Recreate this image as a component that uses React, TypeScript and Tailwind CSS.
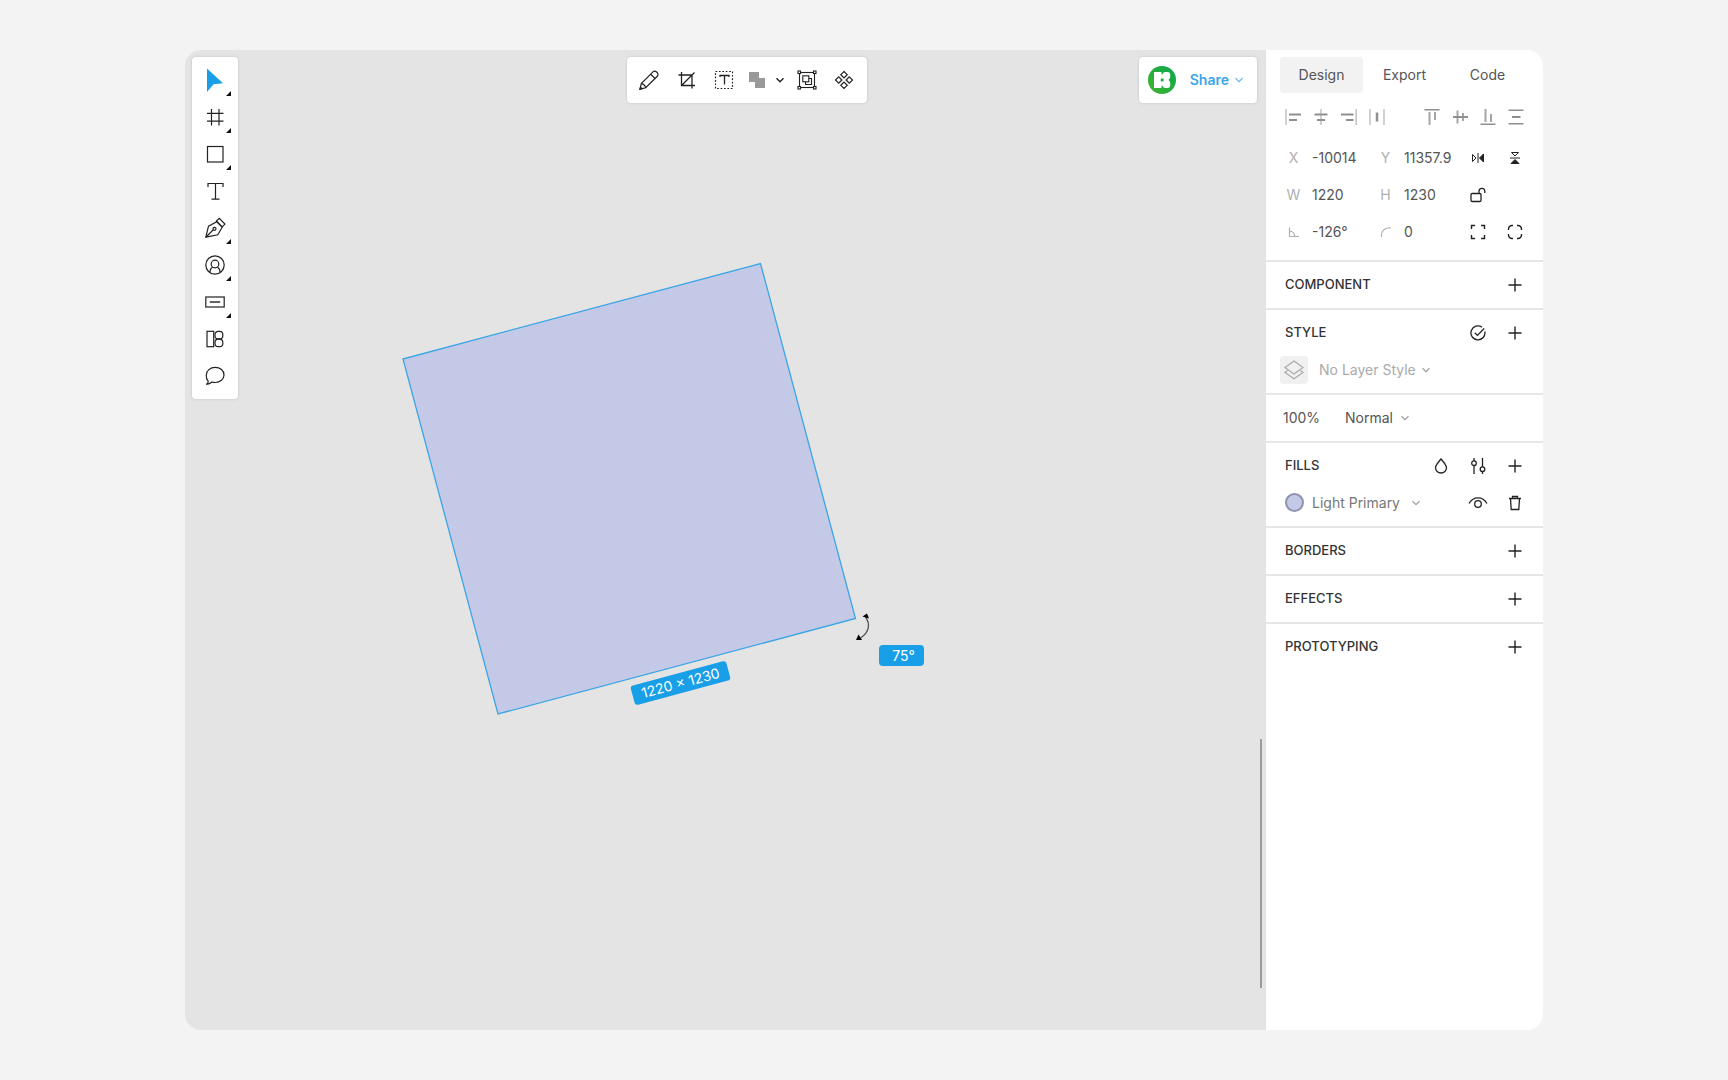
import type { ReactNode } from 'react';

type IconProps = { size?: number; children: ReactNode; className?: string; width?: number };

function Icon({ size = 24, children, className = '', width = 1 }: IconProps) {
  return (
    <svg
      width={size}
      height={size}
      viewBox={`0 0 ${size} ${size}`}
      fill="none"
      stroke="currentColor"
      strokeWidth={width}
      className={`shrink-0 ${className}`}
      aria-hidden="true"
    >
      {children}
    </svg>
  );
}

function Chevron({ className = '' }: { className?: string }) {
  return (
    <Icon size={10} width={1.2} className={className}>
      <path d="M1.5 3.2 5 6.7l3.5-3.5" />
    </Icon>
  );
}

const tools: { name: string; menu: boolean; icon: ReactNode }[] = [
  {
    name: 'Select',
    menu: true,
    icon: <path d="M4 .5 20 15.2 10.6 16.2 4 24Z" fill="#189fe8" stroke="none" />,
  },
  { name: 'Frame', menu: true, icon: <path d="M8.5 4v16.5M16 4v16.5M4 8.3h16.5M4 16.2h16.5" /> },
  { name: 'Rectangle', menu: true, icon: <rect x="4.5" y="4.5" width="15.5" height="15.5" /> },
  { name: 'Text', menu: false, icon: <path d="M5 8V4.5h15V8M12.5 4.5V20M8.5 20.2h8" /> },
  {
    name: 'Pen',
    menu: true,
    icon: (
      <>
        <path d="m2.8 21.2 2.7-11 8.3-4.4 5.4 5.4-4.4 7.6Z" />
        <path d="m13.4 5 2.9-2.7 5.6 5.8-2.7 2.7Z" />
        <path d="m3 21 7.3-7.2" />
        <circle cx="11.5" cy="12.8" r="1.5" />
      </>
    ),
  },
  {
    name: 'Avatar',
    menu: true,
    icon: (
      <>
        <circle cx="12" cy="12" r="9.2" />
        <circle cx="12" cy="11" r="3.8" />
        <path d="M6.8 19.4c.2-2.6 1.2-4.4 2.8-5.4M17.2 19.4c-.2-2.6-1.2-4.4-2.8-5.4" />
      </>
    ),
  },
  {
    name: 'Button',
    menu: true,
    icon: (
      <>
        <rect x="2.8" y="7" width="18.4" height="10" />
        <path d="M6.8 12h10.4" strokeWidth="1.4" />
      </>
    ),
  },
  {
    name: 'Libraries',
    menu: false,
    icon: (
      <>
        <rect x="4" y="4.3" width="6.7" height="15.4" />
        <rect x="12" y="4.3" width="7.8" height="7.6" rx="3.2" />
        <rect x="12" y="12.1" width="7.8" height="7.6" rx="3.2" />
      </>
    ),
  },
  {
    name: 'Comment',
    menu: false,
    icon: <path d="M5.2 17.2A7.9 7.9 0 0 1 3.3 11c0-4.2 3.9-7.6 8.9-7.6s8.8 3.3 8.8 7.5-3.8 7.6-8.8 7.6c-1.2 0-2.2-.2-3.2-.5-1.5 1.5-3.5 2.3-5.700 2.300 1.500-.6 2-1.600 1.900-3.100Z" />,
  },
];

function ToolButton({ name, menu, icon }: { name: string; menu: boolean; icon: ReactNode }) {
  return (
    <button type="button" aria-label={name} className="relative flex h-[37px] w-full items-center justify-center">
      <Icon width={1.2}>{icon}</Icon>
      {menu && (
        <svg width="5" height="5" viewBox="0 0 5 5" className="absolute right-[7px] bottom-0.5" aria-hidden="true">
          <path d="M5 0v5H0Z" fill="#111" />
        </svg>
      )}
    </button>
  );
}

function TopTools() {
  return (
    <div className="ml-[42px] flex h-[46px] items-center rounded-[4px] bg-white pr-1.5 pl-1 text-[#222] shadow-[0_0_3px_rgba(0,0,0,0.15)]">
      <button type="button" aria-label="Pencil" className="flex w-[36px] justify-center">
        <Icon width={1.2}>
          <path d="m3 21.2 1.3-5.6L15.7 4.2c1-1 2.7-1.3 4.2.1s1.3 3.1.2 4.2L8.7 19.8Z" />
          <path d="M13.7 6.2 18.1 10.5M4.3 15.6c2.1.3 3.9 2 4.4 4.2" />
          <path d="m3 21.2 2-.5-1.5-1.5Z" fill="currentColor" />
        </Icon>
      </button>
      <button type="button" aria-label="Crop" className="flex w-[40px] justify-center">
        <Icon width={1.3}>
          <path d="M6.5 4v13.5H20M3.5 7H17v13.5M6.5 17.5 19.5 4.5" />
        </Icon>
      </button>
      <button type="button" aria-label="Fit text" className="flex w-[34px] justify-center">
        <Icon>
          <rect x="3.5" y="3.5" width="17" height="17" strokeWidth="1.2" strokeDasharray="1.7 1.7" />
          <path d="M8 9V7.500h9V9M12.500 7.500V16.500" strokeWidth="1.3" />
        </Icon>
      </button>
      <button type="button" aria-label="Union" className="flex w-[32px] justify-center text-[#999]">
        <Icon>
          <path d="M4 4h10v6h6v10H10v-6H4Z" fill="currentColor" stroke="none" />
        </Icon>
      </button>
      <button type="button" aria-label="Boolean operations" className="flex w-[14px] justify-center">
        <Icon size={10} width={1.4}>
          <path d="M1.5 3.2 5 6.7l3.5-3.5" />
        </Icon>
      </button>
      <button type="button" aria-label="Group" className="flex w-[40px] justify-center">
        <Icon width={1.1}>
          <rect x="4.5" y="4.5" width="15" height="15" />
          <rect x="7.8" y="7.8" width="6" height="6" />
          <path d="M13.8 10.5h2.7v6h-6v-2.7" />
          <g fill="#fff">
            <rect x="3" y="3" width="2.5" height="2.5" />
            <rect x="18.5" y="3" width="2.5" height="2.5" />
            <rect x="3" y="18.5" width="2.5" height="2.5" />
            <rect x="18.5" y="18.5" width="2.5" height="2.5" />
          </g>
        </Icon>
      </button>
      <button type="button" aria-label="Create component" className="flex w-[34px] justify-center">
        <Icon width={1.2}>
          <path d="M12 3.5 15.2 6.7 12 9.9 8.8 6.7ZM12 14.1l3.2 3.2-3.2 3.2-3.2-3.2ZM6.7 8.8l3.2 3.2-3.2 3.2L3.5 12ZM17.3 8.8l3.2 3.2-3.2 3.2-3.2-3.2Z" />
        </Icon>
      </button>
    </div>
  );
}

function ShareBar() {
  return (
    <div className="flex h-[46px] items-center rounded-[4px] bg-white pr-[13px] pl-[9px] shadow-[0_0_3px_rgba(0,0,0,0.15)]">
      <svg width="28" height="28" viewBox="0 0 28 28" role="img" aria-label="Account">
        <defs>
          <linearGradient id="avatar" x1="0" y1="1" x2="1" y2="0">
            <stop offset="0" stopColor="#43b42e" />
            <stop offset="1" stopColor="#0aa650" />
          </linearGradient>
        </defs>
        <circle cx="14" cy="14" r="14" fill="url(#avatar)" />
        <path
          d="M6 6h7.500v2.200h1.300C15 6.800 15.900 6 17.200 6h2.600C21.200 6 22.200 7 22.200 8.500v2.300c0 1.500-.8 2.500-1.900 3.200 1.100.6 1.900 1.600 1.900 3.100v2.400c0 1.500-1 2.500-2.400 2.500h-2.600c-1.300 0-2.200-.8-2.400-2.200h-1.300V22H6Z"
          fill="#fff"
        />
        <path d="M12.800 12.500h2.700v3h-2.700Z" fill="#1fab42" />
      </svg>
      <button type="button" className="ml-[14px] flex items-center gap-[5px] text-sm font-semibold text-[#3ba5ea]">
        Share
        <Chevron className="opacity-80" />
      </button>
    </div>
  );
}

function Canvas() {
  return (
    <main className="relative min-w-0 flex-1 overflow-hidden bg-[#e4e4e4] p-[7px]">
      <div className="grid grid-cols-[1fr_auto_1fr] items-start">
        <nav
          aria-label="Tools"
          className="w-[46px] rounded-[4px] bg-white pt-1 pb-[5px] text-[#222] shadow-[0_0_3px_rgba(0,0,0,0.15)]"
        >
          {tools.map((tool) => (
            <ToolButton key={tool.name} {...tool} />
          ))}
        </nav>
        <TopTools />
        <div className="flex justify-end pr-0.5">
          <ShareBar />
        </div>
      </div>

      <svg
        width="456"
        height="454"
        viewBox="0 0 456 454"
        className="absolute top-[212px] left-[216px]"
        role="img"
        aria-label="Rectangle layer"
      >
        <path d="M2 97 359.5 1.5 454.5 356.5 97 452Z" fill="#c5c9e8" stroke="#3ba5e4" strokeWidth="1.3" />
      </svg>
      <div className="absolute top-[623px] left-[446px] flex h-5 w-[99px] -rotate-15 items-center justify-center rounded-[3px] bg-[#189fe8] text-sm text-white">
        1220 × 1230
      </div>
      <svg width="16" height="30" viewBox="0 0 16 30" className="absolute top-[563px] left-[671px]" aria-hidden="true">
        <path d="M9.5 4c5 7 4 15-5 21" fill="none" stroke="#555" strokeWidth="1.3" />
        <path d="M6.5 3.5 11 .5l2 5ZM0 27l2.500-5.500 3.500 5.500Z" fill="#000" />
      </svg>
      <div className="absolute top-[595px] left-[694px] flex h-[21px] w-[45px] items-center justify-center rounded-[4px] bg-[#189fe8] pl-1 text-sm text-white">
        75°
      </div>
      <div className="absolute right-1 bottom-[42px] h-[249px] w-0.5 bg-[#9b9b9b]" />
    </main>
  );
}

const horizontalAlign: { name: string; icon: ReactNode }[] = [
  { name: 'Align left', icon: <><path d="M1 0v16" className="opacity-60" /><path d="M4 5.5h12M4 11h8" strokeWidth="2" /></> },
  { name: 'Align horizontal centers', icon: <><path d="M8 0v16" className="opacity-60" /><path d="M1.5 5.5h13M4 11h8" strokeWidth="2" /></> },
  { name: 'Align right', icon: <><path d="M15.2 0v16" className="opacity-60" /><path d="M0 5.5h12.5M5 11h7.5" strokeWidth="2" /></> },
  { name: 'Distribute horizontally', icon: <><path d="M1 0v16M15 0v16" className="opacity-60" /><path d="M8 3.5v9" strokeWidth="2.5" /></> },
];

const verticalAlign: { name: string; icon: ReactNode }[] = [
  { name: 'Align top', icon: <><path d="M.5.7h15" /><path d="M5.5 3v13M11 3v8" strokeWidth="2" className="opacity-80" /></> },
  { name: 'Align vertical centers', icon: <><path d="M1 8h15" strokeWidth="2" /><path d="M5.5 1.5v13M11 4v8" strokeWidth="2" className="opacity-80" /></> },
  { name: 'Align bottom', icon: <><path d="M.5 15.3h15" /><path d="M5.5 0v13M11 5v8" strokeWidth="2" className="opacity-80" /></> },
  { name: 'Distribute vertically', icon: <><path d="M.5 1.2h15M.5 14.8h15" /><path d="M4 8h8.5" strokeWidth="2" /></> },
];

function AlignGroup({ items }: { items: { name: string; icon: ReactNode }[] }) {
  return (
    <div className="flex text-[#8f8f8f]">
      {items.map((item) => (
        <button key={item.name} type="button" aria-label={item.name} className="flex w-7 justify-center">
          <Icon size={16} width={1.4}>{item.icon}</Icon>
        </button>
      ))}
    </div>
  );
}

function Field({ id, label, value, name }: { id: string; label: ReactNode; value: string; name: string }) {
  return (
    <>
      <label htmlFor={id} aria-label={name} className="flex justify-center text-[#b0b0b0]">
        {label}
      </label>
      <input id={id} type="text" defaultValue={value} className="w-full min-w-0 bg-transparent outline-none" />
    </>
  );
}

function IconButton({ name, children }: { name: string; children: ReactNode }) {
  return (
    <button type="button" aria-label={name} className="flex h-[37px] w-[37px] shrink-0 items-center justify-center text-[#222]">
      {children}
    </button>
  );
}

function PlusButton({ name }: { name: string }) {
  return (
    <IconButton name={name}>
      <Icon size={14} width={1.4}>
        <path d="M7 .5v13M.5 7h13" />
      </Icon>
    </IconButton>
  );
}

function Section({ title, actions, children }: { title: string; actions?: ReactNode; children?: ReactNode }) {
  return (
    <section className="border-t-2 border-[#e6e6e6] pt-1 pr-2.5 pb-[5px]">
      <div className="flex h-[37px] items-center pl-[19px]">
        <h2 className="flex-1 text-[13px] font-medium text-[#333]">{title}</h2>
        {actions}
        <PlusButton name={`Add ${title.toLowerCase()}`} />
      </div>
      {children}
    </section>
  );
}

function Picker({ label, value, className }: { label: string; value: string; className: string }) {
  return (
    <div className="relative flex items-center">
      <select aria-label={label} defaultValue={value} className={`appearance-none bg-transparent outline-none ${className}`}>
        <option>{value}</option>
      </select>
      <Chevron className="pointer-events-none absolute right-0 text-[#999]" />
    </div>
  );
}

function Inspector() {
  return (
    <aside className="w-[277px] shrink-0 bg-white text-sm text-[#555]">
      <div className="pt-[7px] pb-2.5">
        <div role="tablist" className="mx-3.5 grid h-9 grid-cols-3">
          <button type="button" role="tab" aria-selected="true" className="rounded-[4px] bg-[#f2f2f2]">Design</button>
          <button type="button" role="tab" aria-selected="false">Export</button>
          <button type="button" role="tab" aria-selected="false">Code</button>
        </div>
        <div className="mt-[5px] flex h-[37px] items-center justify-between px-[13px]">
          <AlignGroup items={horizontalAlign} />
          <AlignGroup items={verticalAlign} />
        </div>
        <div className="mt-1 grid auto-rows-[37px] grid-cols-[37px_1fr_37px_1fr_37px_37px] items-center pr-2.5 pl-[9px]">
          <Field id="pos-x" name="X" label="X" value="-10014" />
          <Field id="pos-y" name="Y" label="Y" value="11357.9" />
          <IconButton name="Flip horizontal">
            <Icon size={14}>
              <path d="M1.5 3.5v7L5 7ZM7 2v10" />
              <path d="M12.5 3v8L8.500 7Z" fill="currentColor" />
            </Icon>
          </IconButton>
          <IconButton name="Flip vertical">
            <Icon size={14}>
              <path d="M3.5 1.5h7L7 5ZM2 7h10" />
              <path d="M3 12.5h8L7 8.5Z" fill="currentColor" />
            </Icon>
          </IconButton>
          <Field id="size-w" name="Width" label="W" value="1220" />
          <Field id="size-h" name="Height" label="H" value="1230" />
          <IconButton name="Lock proportions">
            <Icon size={16} width={1.3}>
              <rect x="1" y="6.5" width="10" height="8" rx="1.2" />
              <path d="M9 6.5V4.3a2.8 2.8 0 0 1 5.8 0V6" />
            </Icon>
          </IconButton>
          <span />
          <Field
            id="angle"
            name="Rotation"
            value="-126°"
            label={
              <Icon size={12} width={1.2}>
                <path d="M1.5 1.5v9H11M1.5 5.2c3 0 5.3 2.3 5.3 5.3" />
              </Icon>
            }
          />
          <Field
            id="radius"
            name="Corner radius"
            value="0"
            label={
              <Icon size={12} width={1.2}>
                <path d="M1.5 11V9a7 7 0 0 1 7-7H11" />
              </Icon>
            }
          />
          <IconButton name="Independent corners">
            <Icon size={16} width={1.4}>
              <path d="M1.5 5V1.5H5M11 1.5h3.5V5M14.5 11v3.5H11M5 14.5H1.5V11" />
            </Icon>
          </IconButton>
          <IconButton name="Smooth corners">
            <Icon size={16} width={1.4}>
              <path d="M1.5 6V5A3.5 3.5 0 0 1 5 1.5h1M10 1.5h1A3.5 3.5 0 0 1 14.5 5v1M14.5 10v1a3.5 3.5 0 0 1-3.5 3.5h-1M6 14.5H5A3.5 3.5 0 0 1 1.5 11v-1" />
            </Icon>
          </IconButton>
        </div>
      </div>

      <Section title="COMPONENT" />

      <Section
        title="STYLE"
        actions={
          <IconButton name="Apply style">
            <Icon size={16} width={1.3}>
              <path d="M12 2.2A7 7 0 1 0 14.8 6.5M4.8 7.8l2.6 2.6 6.8-6.9" />
            </Icon>
          </IconButton>
        }
      >
        <div className="flex h-[37px] items-center pl-3.5">
          <span className="mr-[11px] flex h-7 w-7 items-center justify-center rounded-[4px] bg-[#f0f0f0] text-[#aaa]">
            <Icon size={20} width={1.2}>
              <path d="m10 1 9 6.5-9 6.5-9-6.5ZM3.5 10.5 1 12.4l9 6.3 9-6.3-2.5-1.9" />
            </Icon>
          </span>
          <Picker label="Layer style" value="No Layer Style" className="w-[112px] text-[#aaa]" />
        </div>
      </Section>

      <section className="border-t-2 border-[#e6e6e6] pt-1 pb-[5px]">
        <div className="flex h-[37px] items-center pl-[17px]">
          <input type="text" aria-label="Opacity" defaultValue="100%" className="w-[62px] bg-transparent outline-none" />
          <Picker label="Blend mode" value="Normal" className="w-[65px] text-[#555]" />
        </div>
      </section>

      <Section
        title="FILLS"
        actions={
          <>
            <IconButton name="Fill colour">
              <Icon size={16} width={1.3}>
                <path d="M8 1C5 4.7 2.5 7 2.5 9.8a5.5 5.2 0 0 0 11 0C13.5 7 11 4.7 8 1Z" />
              </Icon>
            </IconButton>
            <IconButton name="Fill settings">
              <Icon size={16} width={1.3}>
                <path d="M4 0v3M4 7.5V16M12.5 0v9M12.5 13.5V16" />
                <circle cx="4" cy="5.2" r="2.3" />
                <circle cx="12.5" cy="11.2" r="2.3" />
              </Icon>
            </IconButton>
          </>
        }
      >
        <div className="flex h-[37px] items-center pl-[19px]">
          <span className="mr-2 h-[19px] w-[19px] rounded-full border-2 border-[#8f92ad] bg-[#c5c9e8]" />
          <Picker label="Fill" value="Light Primary" className="w-[109px] text-[#777]" />
          <div className="ml-auto flex">
            <IconButton name="Toggle visibility">
              <Icon size={20} width={1.3}>
                <path d="M1 10.5c4.5-7.5 13.5-7.5 18 0" />
                <circle cx="10" cy="11" r="3.3" />
              </Icon>
            </IconButton>
            <IconButton name="Delete fill">
              <Icon size={16} width={1.3}>
                <path d="M2 3.5h12M5.5 3.5V1.5h5v2M3.5 3.5l.7 11h7.6l.7-11" />
              </Icon>
            </IconButton>
          </div>
        </div>
      </Section>

      <Section title="BORDERS" />
      <Section title="EFFECTS" />
      <Section title="PROTOTYPING" />
    </aside>
  );
}

export default function App() {
  return (
    <div className="flex min-h-screen bg-[#f3f3f3] px-[185px] py-[50px] font-['Inter',sans-serif]">
      <div className="flex flex-1 overflow-hidden rounded-2xl">
        <Canvas />
        <Inspector />
      </div>
    </div>
  );
}
